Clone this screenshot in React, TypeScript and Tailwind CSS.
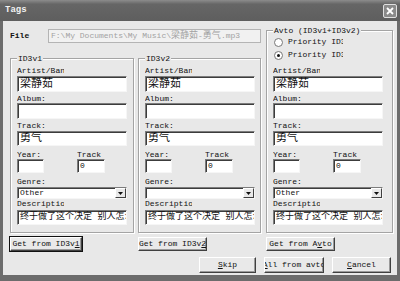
import React from "react";

const font = "font-['Liberation_Mono','Noto_Sans_CJK_SC',monospace]";

function Label({ children, className = "w-[47px]" }: { children: React.ReactNode; className?: string }) {
  return (
    <div className={"h-[9px] overflow-hidden whitespace-nowrap text-[8px] leading-[9px] text-[#111] " + className}>
      {children}
    </div>
  );
}

function Field({ value = "", className = "" }: { value?: string; className?: string }) {
  return (
    <div
      className={
        "bg-white border border-t-[#7c7c7c] border-l-[#7c7c7c] border-r-[#f6f6f6] border-b-[#f6f6f6] shadow-[inset_1px_1px_0_#3c3c3c] overflow-hidden whitespace-nowrap pl-[2px] text-[#111] " +
        className
      }
    >
      {value}
    </div>
  );
}

function Btn({
  children,
  className = "",
}: {
  children: React.ReactNode;
  className?: string;
}) {
  return (
    <div
      className={
        "flex items-center justify-center overflow-hidden whitespace-nowrap bg-[#e9e9e9] text-[8px] leading-none text-[#111] border border-t-white border-l-white border-r-[#404040] border-b-[#404040] shadow-[inset_-1px_-1px_0_#9a9a9a] " +
        className
      }
    >
      {children}
    </div>
  );
}

function Group({
  title,
  genre,
  tall,
}: {
  title: string;
  genre: string;
  tall?: boolean;
}) {
  return (
    <div
      className={
        "flex flex-col pl-[6px] border border-[#a4a4a4] shadow-[1px_1px_0_#fff,inset_1px_1px_0_#fff] " +
        (tall ? "h-[203px]" : "h-[175px]")
      }
    >
      <div className="-mt-[5px] h-[10px] leading-[10px] text-[8px] w-fit px-[1px] bg-[#e8e8e8] text-[#111]">
        {title}
      </div>
      {tall && (
        <>
          <div className="mt-[1px] h-[10px] flex items-center">
            <div className="ml-[1px] w-[9px] h-[9px] rounded-full bg-white border border-[#777]" />
            <div className="ml-[5px] w-[55px] overflow-hidden whitespace-nowrap text-[8px] leading-[10px] text-[#111]">
              Priority ID3v1
            </div>
          </div>
          <div className="mt-[3px] h-[10px] flex items-center">
            <div className="ml-[1px] w-[9px] h-[9px] rounded-full bg-white border border-[#777] flex items-center justify-center">
              <div className="w-[3px] h-[3px] rounded-full bg-[#111]" />
            </div>
            <div className="ml-[5px] w-[55px] overflow-hidden whitespace-nowrap text-[8px] leading-[10px] text-[#111]">
              Priority ID3v2
            </div>
          </div>
          <div className="h-[6px]" />
        </>
      )}
      <Label className={tall ? "w-[47px]" : "w-[47px] mt-[2px]"}>Artist/Band:</Label>
      <Field value="梁静茹" className="w-[110px] mt-[1px] h-[16px] text-[11px] leading-[14px]" />
      <Label className="w-[47px] mt-[2px]">Album:</Label>
      <Field className="w-[110px] h-[16px]" />
      <Label className="w-[47px] mt-[2px]">Track:</Label>
      <Field value="勇气" className="w-[110px] mt-[1px] h-[15px] text-[11px] leading-[13px]" />
      <div className="mt-[4px] flex">
        <Label className="w-[60px]">Year:</Label>
        <Label className="w-[27px]">Track #:</Label>
      </div>
      <div className="flex">
        <Field className="w-[27px] h-[14px]" />
        <Field value="0" className="ml-[33px] w-[28px] h-[14px] text-[8px] leading-[12px]" />
      </div>
      <Label className="w-[47px] mt-[4px]">Genre:</Label>
      <div className="mt-[1px] w-[110px] h-[12px] flex bg-white border border-t-[#7c7c7c] border-l-[#7c7c7c] border-r-[#f6f6f6] border-b-[#f6f6f6] shadow-[inset_1px_1px_0_#3c3c3c]">
        <div className="flex-1 pl-[2px] text-[8px] leading-[10px] text-[#111]">{genre}</div>
        <div className="w-[11px] h-[10px] bg-[#e9e9e9] border border-t-white border-l-white border-r-[#404040] border-b-[#404040] flex items-center justify-center">
          <svg width="5" height="3" viewBox="0 0 5 3">
            <path d="M0 0h5L2.5 3z" fill="#111" />
          </svg>
        </div>
      </div>
      <Label className="w-[47px]">Description:</Label>
      <Field
        value="终于做了这个决定 别人怎么说我不理"
        className="w-[110px] mt-[2px] h-[15px] text-[9px] leading-[13px]"
      />
    </div>
  );
}

export default function App() {
  return (
    <div className={"w-[400px] h-[281px] flex flex-col bg-[#6c6c6c] " + font}>
      <div className="h-[21px] shrink-0 flex items-center justify-between bg-linear-to-b from-[#8c8c8c] via-[#666666] via-20% to-[#5e5e5e]">
        <div className="pl-[5px] text-[9px] font-bold text-[#f2f2f2]">Tags</div>
        <div className="mr-[3px] w-[14px] h-[14px] bg-[#8a8a8a] border border-[#e0e0e0] rounded-[2px] flex items-center justify-center">
          <svg width="8" height="8" viewBox="0 0 8 8">
            <path d="M1 1L7 7M7 1L1 7" stroke="#fff" strokeWidth="1.8" />
          </svg>
        </div>
      </div>
      <div className="flex-1 px-[3px] pb-[6px] flex">
        <div className="flex-1 bg-[#e8e8e8] flex flex-col">
          <div className="flex">
            <div className="w-[258px] pl-[7px] flex flex-col">
              <div className="mt-[8px] h-[14px] flex items-center">
                <div className="w-[38px] text-[8px] font-bold text-[#111]">File</div>
                <div className="w-[213px] h-[14px] bg-[#f1f1f1] border border-[#b4b4b4] overflow-hidden whitespace-nowrap pl-[2px] text-[8px] leading-[12px] text-[#a2a2a2]">
                  F:\My Documents\My Music\<span className="text-[9px]">梁静茹</span>-<span className="text-[9px]">勇气</span>.mp3
                </div>
              </div>
              <div className="mt-[15px] flex gap-[4px]">
                <div className="w-[124px] flex flex-col">
                  <Group title="ID3v1" genre="Other" />
                  <Btn className="mt-[4px] w-[72px] h-[14px] ring-1 ring-[#111]">
                    Get from ID3v<span className="underline">1</span>
                  </Btn>
                </div>
                <div className="w-[123px] flex flex-col">
                  <Group title="ID3v2" genre="" />
                  <Btn className="mt-[4px] w-[69px] h-[14px]">
                    Get from ID3v<span className="underline">2</span>
                  </Btn>
                </div>
              </div>
            </div>
            <div className="ml-[5px] mt-[9px] w-[127px] flex flex-col">
              <Group title="Avto (ID3v1+ID3v2)" genre="Other" tall />
              <Btn className="mt-[4px] w-[69px] h-[14px]">
                Get from A<span className="underline">v</span>to
              </Btn>
            </div>
          </div>
          <div className="mt-[6px] pr-[6px] flex justify-end gap-[8px]">
            <Btn className="w-[57px] h-[16px]">
              <span className="underline">S</span>kip
            </Btn>
            <Btn className="w-[60px] h-[16px]">
              <span className="underline">A</span>ll from avto
            </Btn>
            <Btn className="w-[59px] h-[16px]">
              <span className="underline">C</span>ancel
            </Btn>
          </div>
        </div>
      </div>
    </div>
  );
}
